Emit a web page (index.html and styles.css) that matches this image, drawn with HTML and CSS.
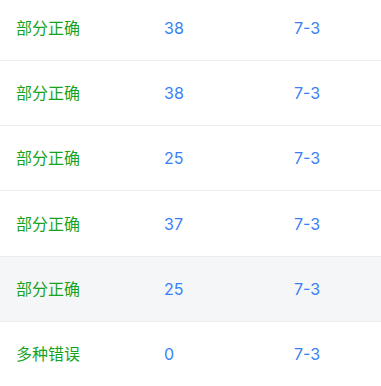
FILE: index.html
```html
<!DOCTYPE html>
<html lang="zh-CN">
<head>
<meta charset="utf-8">
<link rel="stylesheet" href="styles.css">
</head>
<body>
<div class="table">
  <div class="row first"><div class="cell c1 status">部分正确</div><div class="cell c2 num">38</div><div class="cell c3 num">7-3</div></div>
  <div class="row"><div class="cell c1 status">部分正确</div><div class="cell c2 num">38</div><div class="cell c3 num">7-3</div></div>
  <div class="row"><div class="cell c1 status">部分正确</div><div class="cell c2 num">25</div><div class="cell c3 num">7-3</div></div>
  <div class="row"><div class="cell c1 status">部分正确</div><div class="cell c2 num">37</div><div class="cell c3 num">7-3</div></div>
  <div class="row hover"><div class="cell c1 status">部分正确</div><div class="cell c2 num">25</div><div class="cell c3 num">7-3</div></div>
  <div class="row"><div class="cell c1 status">多种错误</div><div class="cell c2 num">0</div><div class="cell c3 num">7-3</div></div>
</div>
</body>
</html>
```
FILE: styles.css
```css
html, body {
  margin: 0;
  padding: 0;
  background: #ffffff;
  overflow: hidden;
}
body {
  font-family: Inter, "Noto Sans CJK SC", sans-serif;
  font-size: 16px;
}
.table {
  display: flex;
  flex-direction: column;
  margin-top: -4.5px;
}
.row {
  display: grid;
  grid-template-columns: 148px 130px 1fr;
  align-items: center;
  height: 64.3px;
  border-bottom: 1px solid #ededed;
}
.row.hover {
  background: #f5f6f8;
}
.cell {
  padding: 0 16px;
  line-height: 22px;
}
.status {
  color: #18a31f;
}
.num {
  color: #3b7ff6;
}
```
